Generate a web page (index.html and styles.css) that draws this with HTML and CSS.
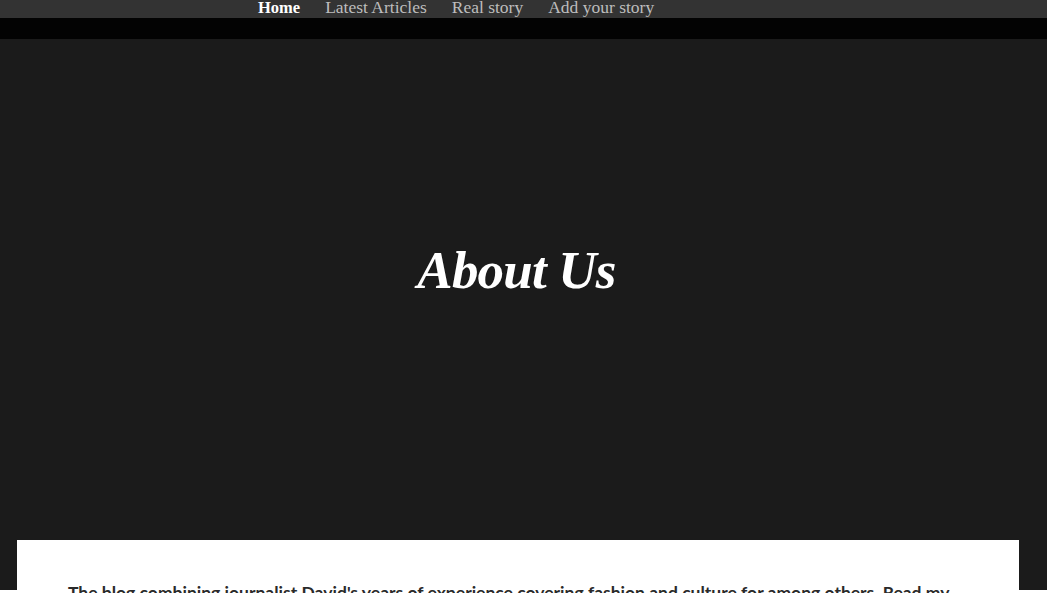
FILE: index.html
```html
<!DOCTYPE html>
<html lang="en">
<head>
<meta charset="utf-8">
<title>About Us</title>
<link rel="stylesheet" href="styles.css">
</head>
<body>
<header class="topnav">
  <ul class="menu">
    <li><a class="active" href="#">Home</a></li>
    <li><a href="#">Latest Articles</a></li>
    <li><a href="#">Real story</a></li>
    <li><a href="#">Add your story</a></li>
  </ul>
</header>
<div class="strip"></div>
<section class="hero">
  <h1 class="hero-title">About Us</h1>
</section>
<main class="card">
  <p class="lead">The blog combining journalist David's years of experience covering fashion and culture for among others. Read my stories and share your own with the community.</p>
</main>
</body>
</html>
```
FILE: styles.css
```css
html, body {
  margin: 0;
  padding: 0;
  background: #ffffff;
}
body {
  font-family: "Liberation Serif", serif;
}
.topnav {
  height: 18px;
  background: #333333;
  overflow: hidden;
}
.menu {
  list-style: none;
  margin: 0;
  padding: 0 0 0 258px;
  display: flex;
  gap: 25px;
}
.menu a {
  display: block;
  font-family: "Liberation Serif", serif;
  font-size: 17.5px;
  line-height: 15px;
  color: #bdbdbd;
  text-decoration: none;
}
.menu a.active {
  color: #ffffff;
  font-weight: bold;
  font-size: 16.5px;
}
.strip {
  height: 21px;
  background: #030303;
}
.hero {
  background: #1b1b1b;
  height: 551px;
  box-sizing: border-box;
  padding: 196px 14px 0 0;
}
.hero-title {
  margin: 0;
  text-align: center;
  color: #ffffff;
  font-family: "Liberation Serif", serif;
  font-style: italic;
  font-weight: bold;
  font-size: 53px;
  line-height: 70px;
  letter-spacing: -0.8px;
}
.card {
  position: relative;
  background: #ffffff;
  margin: -50px 28px 0 17px;
  padding: 40px 51px 40px;
}
.lead {
  margin: 0;
  font-family: Lato, "Liberation Sans", sans-serif;
  font-weight: bold;
  font-size: 17.5px;
  line-height: 26px;
  color: #2a2a2a;
  max-width: 895px;
}
```
